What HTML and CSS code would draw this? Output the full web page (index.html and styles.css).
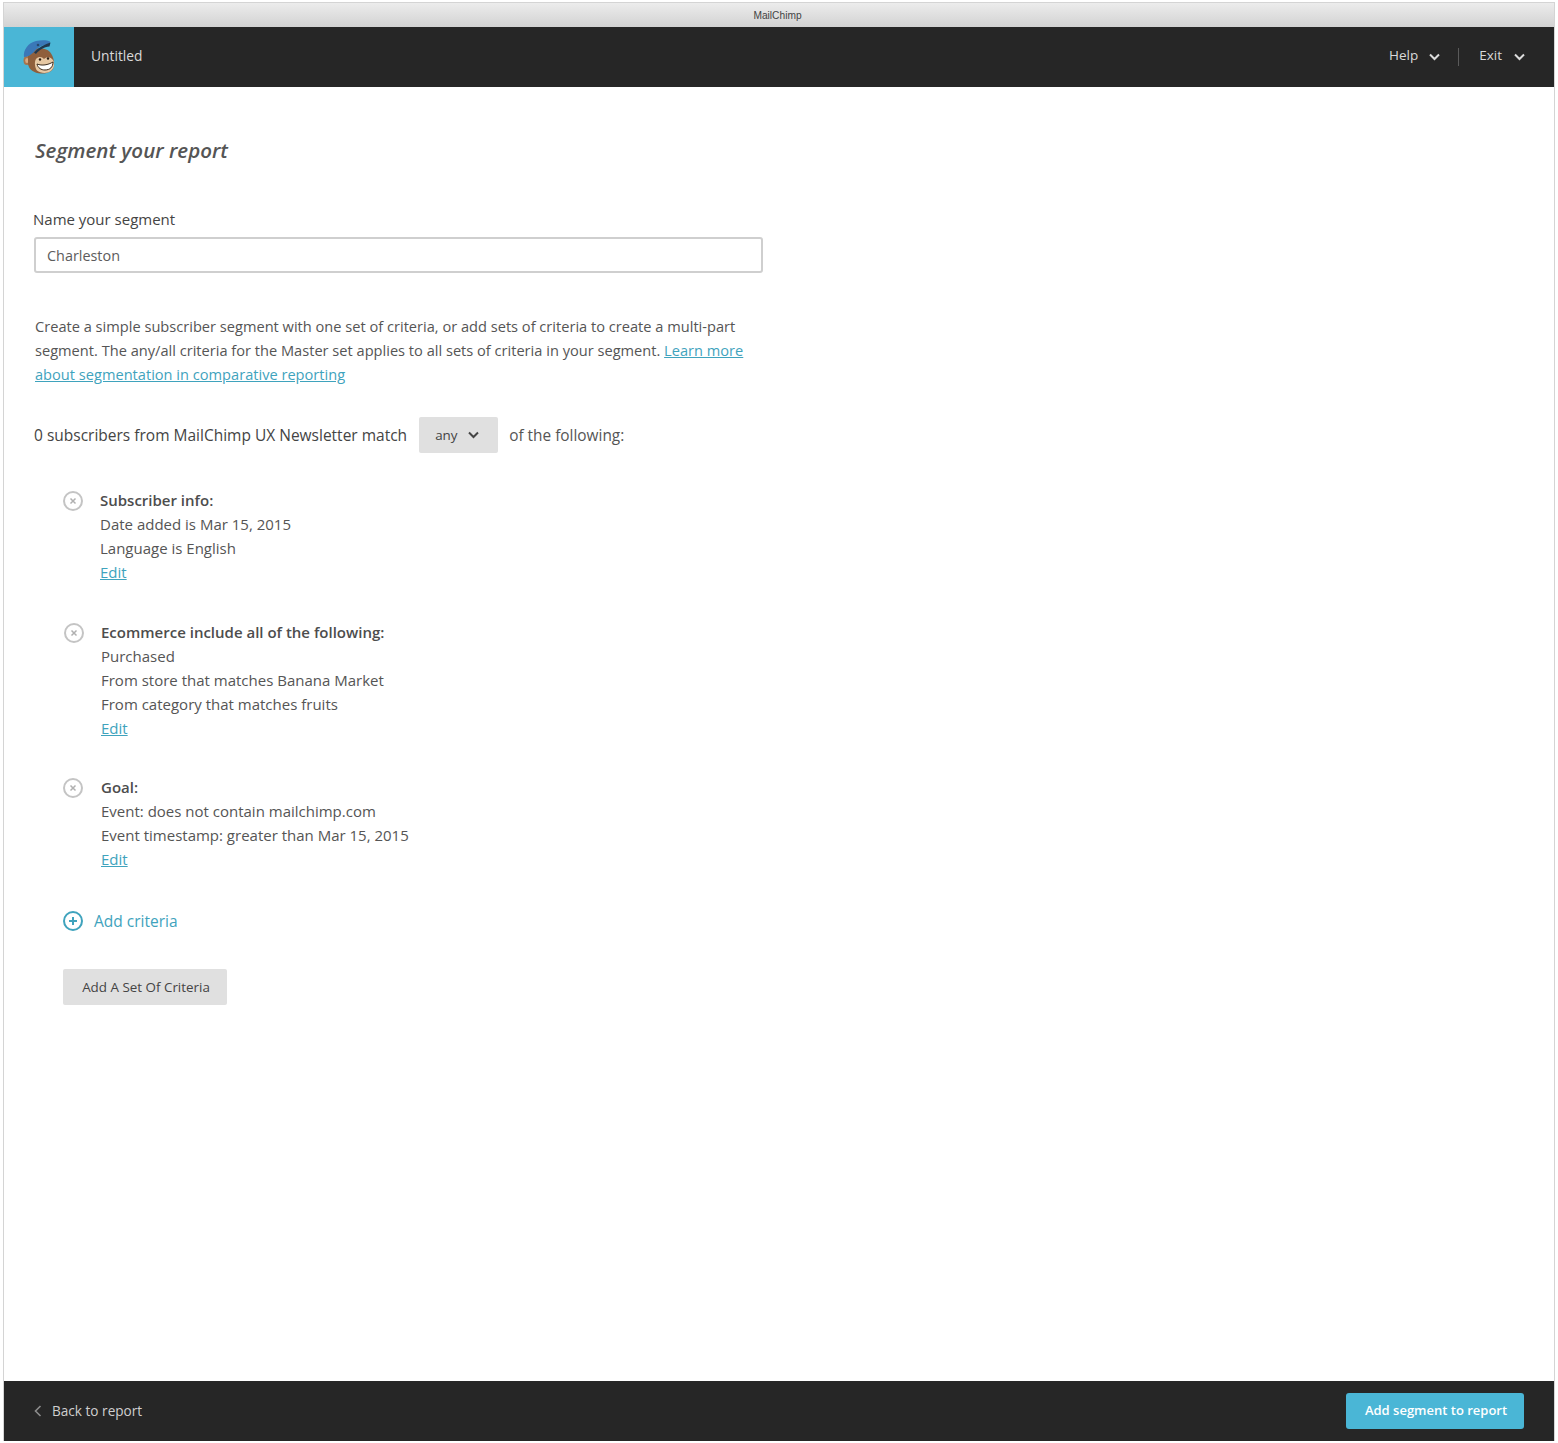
FILE: index.html
```html
<!DOCTYPE html>
<html lang="en">
<head>
<meta charset="utf-8">
<title>MailChimp</title>
<link rel="stylesheet" href="styles.css">
</head>
<body>
<div class="window">
  <div class="titlebar">MailChimp</div>
  <header class="topbar">
    <div class="logo">
      <svg width="32" height="35" viewBox="0 0 32 35">
        <ellipse cx="4" cy="20.500" rx="3.500" ry="4.500" fill="#a8744c"/>
        <ellipse cx="4" cy="20.500" rx="1.800" ry="2.600" fill="#d8aa80"/>
        <path d="M5 12C12 7 22 7 27 12C31 17 32 24 30 29C28 32 23 34 18 33.500C11 33 6 30 5 24Z" fill="#8f5f3c"/>
        <path d="M13 19C16 16 19 17 21 19C24 16 28 17 30 20C32 25 31 29 27 31.500C23 34 17 33 14 30.500C12 28 11 22 13 19Z" fill="#e6c8a4"/>
        <path d="M14 24C19 26 25 25 30 22C30 27 27 30 22 30C18 30 15 28 14 24Z" fill="#fff" stroke="#3b2a1c" stroke-width="1"/>
        <circle cx="17" cy="19.500" r="1.200" fill="#2a1c12"/>
        <circle cx="25" cy="18.500" r="1.200" fill="#2a1c12"/>
        <path d="M1 17C0 10 5 3 13 1C18 0 24 0 27 1.500L27 4C20 4 14 8 11 12C8 15 4 17 1 17Z" fill="#3a78b8"/>
        <path d="M11 12.500C15 8 21 4.500 27.500 2.500L26.500 6.500C21 7 16 10 13 14Z" fill="#20384f"/>
        <circle cx="15" cy="5" r="1.300" fill="#26496e"/>
      </svg>
    </div>
    <div class="doc-title">Untitled</div>
    <nav class="topnav">
      <span class="navitem"><span class="navlabel">Help</span>
        <svg class="chev" width="11" height="8" viewBox="0 0 11 8"><path d="M1 1.500l4.500 4.500 4.500-4.500" fill="none" stroke="#dcdcdc" stroke-width="2"/></svg>
      </span>
      <span class="navsep"></span>
      <span class="navitem navitem-last"><span class="navlabel">Exit</span>
        <svg class="chev" width="11" height="8" viewBox="0 0 11 8"><path d="M1 1.500l4.500 4.500 4.500-4.500" fill="none" stroke="#dcdcdc" stroke-width="2"/></svg>
      </span>
    </nav>
  </header>
  <main class="content">
    <h1 class="page-title">Segment your report</h1>
    <label class="field-label">Name your segment</label>
    <div class="text-input">Charleston</div>
    <p class="intro">Create a simple subscriber segment with one set of criteria, or add sets of criteria to create a multi-part segment. The any/all criteria for the Master set applies to all sets of criteria in your segment. <a href="#">Learn more about segmentation in comparative reporting</a></p>
    <div class="match-row">
      <span class="match-a">0 subscribers from MailChimp UX Newsletter match</span>
      <span class="select">any
        <svg width="11" height="8" viewBox="0 0 11 8"><path d="M1 1.500l4.500 4.500 4.500-4.500" fill="none" stroke="#444" stroke-width="2"/></svg>
      </span>
      <span class="match-b">of the following:</span>
    </div>
    <section class="crit crit-one">
      <svg class="x-icon" width="20" height="20" viewBox="0 0 20 20"><circle cx="10" cy="10" r="9" fill="none" stroke="#c4c4c4" stroke-width="2"/><path d="M7.500 7.500l5 5m0-5l-5 5" stroke="#b0b0b0" stroke-width="1.500"/></svg>
      <div class="crit-body">
        <div class="crit-head">Subscriber info:</div>
        <div>Date added is Mar 15, 2015</div>
        <div>Language is English</div>
        <a href="#">Edit</a>
      </div>
    </section>
    <section class="crit crit-two">
      <svg class="x-icon" width="20" height="20" viewBox="0 0 20 20"><circle cx="10" cy="10" r="9" fill="none" stroke="#c4c4c4" stroke-width="2"/><path d="M7.500 7.500l5 5m0-5l-5 5" stroke="#b0b0b0" stroke-width="1.500"/></svg>
      <div class="crit-body">
        <div class="crit-head">Ecommerce include all of the following:</div>
        <div>Purchased</div>
        <div>From store that matches Banana Market</div>
        <div>From category that matches fruits</div>
        <a href="#">Edit</a>
      </div>
    </section>
    <section class="crit crit-three">
      <svg class="x-icon" width="20" height="20" viewBox="0 0 20 20"><circle cx="10" cy="10" r="9" fill="none" stroke="#c4c4c4" stroke-width="2"/><path d="M7.500 7.500l5 5m0-5l-5 5" stroke="#b0b0b0" stroke-width="1.500"/></svg>
      <div class="crit-body">
        <div class="crit-head">Goal:</div>
        <div>Event: does not contain mailchimp.com</div>
        <div>Event timestamp: greater than Mar 15, 2015</div>
        <a href="#">Edit</a>
      </div>
    </section>
    <div class="add-criteria">
      <svg width="20" height="20" viewBox="0 0 20 20"><circle cx="10" cy="10" r="9" fill="none" stroke="#3fa3bd" stroke-width="2"/><path d="M10 6v8M6 10h8" stroke="#3fa3bd" stroke-width="2"/></svg>
      <span>Add criteria</span>
    </div>
    <div class="set-btn">Add A Set Of Criteria</div>
  </main>
  <footer class="bottombar">
    <span class="back">
      <svg width="8" height="12" viewBox="0 0 8 12"><path d="M6.500 1L1.500 6l5 5" fill="none" stroke="#8c8c8c" stroke-width="1.600"/></svg>
      <span class="back-label">Back to report</span>
    </span>
    <span class="primary">Add segment to report</span>
  </footer>
</div>
</body>
</html>
```

FILE: styles.css
```css
html, body { margin: 0; padding: 0; background: #fff; }
body { font-family: "Open Sans", sans-serif; color: #444; }
.window {
  margin: 3px 4px 0 4px;
  width: 1550px;
  height: 1438px;
  box-sizing: border-box;
  display: flex;
  flex-direction: column;
  box-shadow: 0 0 0 1px #d4d4d4;
}
.titlebar {
  height: 24px;
  flex: none;
  padding-right: 3px;
  background: linear-gradient(#ececec, #d2d2d2);
  font-family: "Liberation Sans", sans-serif;
  font-size: 10.200px;
  line-height: 25px;
  text-align: center;
  color: #444;
}
.topbar {
  height: 60px;
  flex: none;
  background: #262626;
  display: flex;
  align-items: center;
  color: #d9d9d9;
  font-size: 13.800px;
}
.logo {
  width: 70px;
  height: 60px;
  background: #4ab6d6;
  display: flex;
  align-items: center;
  justify-content: center;
  padding-right: 1px;
  box-sizing: border-box;
}
.doc-title { margin-left: 17px; padding-bottom: 4px; }
.topnav { margin-left: auto; margin-right: 29px; display: flex; align-items: center; font-size: 13.500px; }
.navitem { display: flex; align-items: center; gap: 11px; }
.navitem-last { gap: 12px; }
.navlabel { padding-bottom: 4px; }
.navsep { width: 1px; height: 18px; background: #5a5a5a; margin: 0 20px 0 18px; }
.content { flex: 1; padding: 0 0 0 30px; font-size: 15px; line-height: 24px; }
.page-title {
  font-size: 20.500px;
  font-weight: 600;
  font-style: italic;
  line-height: 28px;
  margin: 49px 0 0 1px;
  color: #555;
}
.field-label { display: block; margin: 43px 0 6px -1px; color: #444; }
.text-input {
  width: 729px;
  height: 36px;
  box-sizing: border-box;
  border: 2px solid #cfcfcf;
  border-radius: 3px;
  padding: 0 11px;
  line-height: 33px;
  font-size: 14.400px;
  color: #5c5c5c;
}
.intro { width: 730px; margin: 41px 0 0 1px; color: #555; font-size: 14.620px; }
a { color: #3fa3bd; text-decoration: underline; }
.match-row { display: flex; align-items: center; height: 36px; margin-top: 31px; color: #444; font-size: 15.500px; }
.select {
  display: flex; align-items: center; gap: 10px;
  width: 79px; height: 36px; box-sizing: border-box;
  background: #e0e0e0; border-radius: 2px;
  margin: 0 11px 0 12px;
  padding-left: 16px;
  font-size: 13.400px;
}
.match-b { color: #555; font-size: 15.400px; padding-top: 2px; }
.crit { display: flex; color: #555; }
.crit-one { margin: 35px 0 0 29px; gap: 17px; }
.crit-two { margin: 36px 0 0 30px; gap: 17px; }
.crit-three { margin: 35px 0 0 29px; gap: 18px; }
.x-icon { flex: none; margin-top: 3px; }
.crit-head { font-weight: 600; color: #4d4d4d; }
.add-criteria { display: flex; align-items: center; gap: 11px; margin: 38px 0 0 29px; color: #3fa3bd; font-size: 15.500px; }
.set-btn {
  width: 164px; height: 36px; margin: 36px 0 0 29px;
  padding-left: 2px; box-sizing: border-box;
  background: #e0e0e0; border-radius: 2px;
  text-align: center; font-size: 13.400px; line-height: 36px; color: #444;
}
.bottombar {
  height: 60px; flex: none;
  background: #262626;
  display: flex; align-items: center; justify-content: space-between;
  padding: 0 30px;
  font-size: 13.600px; color: #cfcfcf;
}
.back { display: flex; align-items: center; gap: 10px; }
.back-label { padding-bottom: 2px; }
.primary {
  width: 178px; height: 36px;
  padding-left: 2px; box-sizing: border-box;
  background: #4ab6d6; border-radius: 3px;
  color: #fff; font-weight: 600; font-size: 13px;
  text-align: center; line-height: 35px;
}
```
